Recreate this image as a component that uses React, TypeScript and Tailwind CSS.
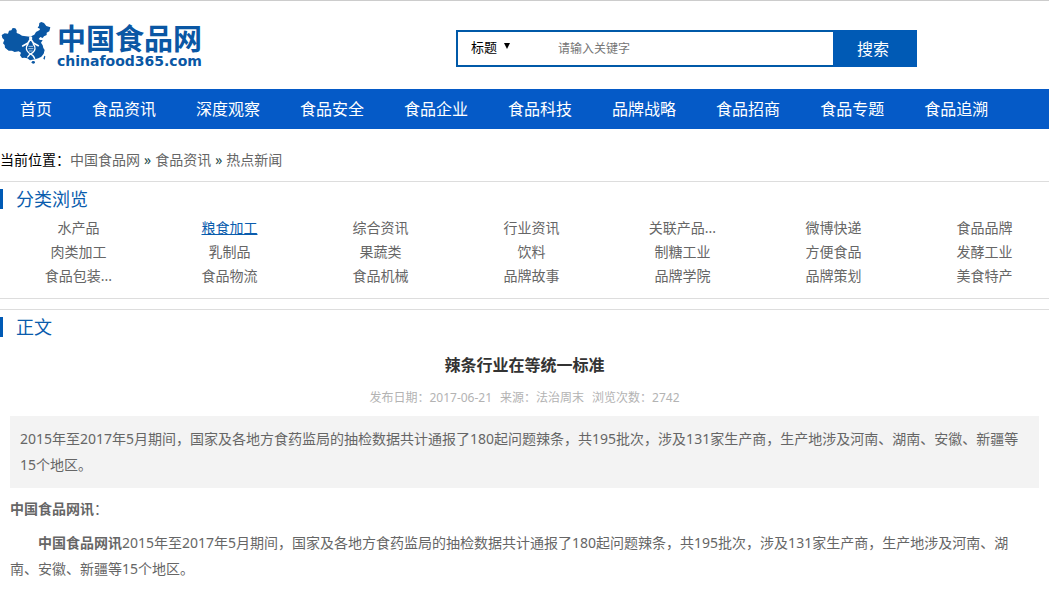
import type { ReactNode } from 'react';

const navItems = [
  '首页',
  '食品资讯',
  '深度观察',
  '食品安全',
  '食品企业',
  '食品科技',
  '品牌战略',
  '食品招商',
  '食品专题',
  '食品追溯',
];

const categories = [
  '水产品',
  '粮食加工',
  '综合资讯',
  '行业资讯',
  '关联产品...',
  '微博快递',
  '食品品牌',
  '肉类加工',
  '乳制品',
  '果蔬类',
  '饮料',
  '制糖工业',
  '方便食品',
  '发酵工业',
  '食品包装...',
  '食品物流',
  '食品机械',
  '品牌故事',
  '品牌学院',
  '品牌策划',
  '美食特产',
];

const activeCategory = '粮食加工';

const summary =
  '2015年至2017年5月期间，国家及各地方食药监局的抽检数据共计通报了180起问题辣条，共195批次，涉及131家生产商，生产地涉及河南、湖南、安徽、新疆等15个地区。';

function MapMark() {
  return (
    <svg viewBox="0 9 153 135" className="h-[45px] w-[51px] shrink-0" aria-hidden="true">
      <path
        fill="#0a57a4"
        d="M5 51L14 46L24 47L27 38L34 37L38 30L46 31L50 37L50 45L58 48L66 53L78 55L90 56L103 50L108 42L119 36L120 32L113 29L117 23L118 15L124 12L132 15L139 24L151 28L148 40L140 44L140 51L132 55L128 60L121 57L116 63L121 66L128 66L123 74L128 82L130 90L134 96L131 107L124 116L115 121L105 124L90 127L82 121L73 119L66 120L60 112L63 104L56 100L44 102L36 98L26 98L15 89L14 81L9 76L13 66L7 60Z"
      />
      <ellipse cx="100" cy="133" rx="5" ry="4" fill="#0a57a4" />
      <path d="M130 122L133 113L136 115L134 125Z" fill="#0a57a4" />
      <g fill="none" stroke="#fff" strokeLinecap="round" strokeLinejoin="round">
        <path d="M92 62L84 75L68 84M92 62L100 75L115 83" strokeWidth="5" />
        <path d="M84 78C76 88 78 98 87 105C94 109 102 112 104 122" strokeWidth="4" />
        <path d="M100 78C108 88 106 98 98 104C90 108 86 111 83 117" strokeWidth="4" />
        <path d="M87 85H98M86 92H99M88 99H97" strokeWidth="2" />
      </g>
      <circle cx="92" cy="60" r="5" fill="#fff" />
    </svg>
  );
}

function Logo() {
  return (
    <a href="#" className="flex w-[204px] shrink-0 items-start text-[#0a57a4]">
      <MapMark />
      <span className="ml-1.5 flex flex-col whitespace-nowrap pt-0.5 font-bold">
        <span className="text-[29px] leading-8">中国食品网</span>
        <span className="font-['DejaVu_Sans',sans-serif] text-sm leading-3">chinafood365.com</span>
      </span>
    </a>
  );
}

function SearchBar() {
  return (
    <form className="flex h-[37px] w-[461px]" onSubmit={(e) => e.preventDefault()}>
      <div className="flex min-w-0 flex-1 items-center border-2 border-r-0 border-[#0059a8]">
        <div className="relative ml-[13px] w-[87px] shrink-0 pb-1">
          <select
            aria-label="搜索范围"
            className="block h-6 w-full appearance-none bg-transparent text-[13px] leading-6 text-black outline-none"
          >
            <option>标题</option>
          </select>
          <svg
            viewBox="0 0 6 6"
            className="pointer-events-none absolute left-[33px] top-2 size-1.5"
            aria-hidden="true"
          >
            <path d="M0 0h6L3 6z" />
          </svg>
        </div>
        <input
          type="text"
          aria-label="关键字"
          placeholder="请输入关键字"
          className="h-full min-w-0 flex-1 bg-transparent text-xs outline-none placeholder:text-[#757575]"
        />
      </div>
      <button type="submit" className="w-[84px] bg-[#005ab5] pr-1 text-base text-white">
        搜索
      </button>
    </form>
  );
}

function SectionTitle({ children }: { children: ReactNode }) {
  return (
    <h2 className="flex h-5 items-center text-lg leading-5 text-[#0a5cad]">
      <span className="mr-[13px] h-5 w-[3px] bg-[#005ab5]" />
      {children}
    </h2>
  );
}

function Breadcrumb() {
  return (
    <nav className="flex h-[52px] items-center gap-1 pt-[10px] text-sm text-[#666]">
      <span className="w-[66px] whitespace-nowrap text-black">当前位置：</span>
      <a href="#">中国食品网</a>
      <span className="text-[#1c4a4a]">»</span>
      <a href="#">食品资讯</a>
      <span className="text-[#1c4a4a]">»</span>
      <a href="#">热点新闻</a>
    </nav>
  );
}

function App() {
  return (
    <div className="overflow-x-hidden border-t border-[#ccc] bg-white font-['Noto_Sans','Noto_Sans_CJK_SC',sans-serif]">
      <header className="flex h-[88px] items-start gap-[252px]">
        <div className="pt-5">
          <Logo />
        </div>
        <div className="pt-[29px]">
          <SearchBar />
        </div>
      </header>

      <nav className="flex h-10 bg-[#055ac7] text-base text-white">
        {navItems.map((item) => (
          <a key={item} href="#" className="whitespace-nowrap px-5 leading-10">
            {item}
          </a>
        ))}
      </nav>

      <Breadcrumb />

      <section className="border-y border-[#ddd] pb-[10px] pt-[7px]">
        <SectionTitle>分类浏览</SectionTitle>
        <ul className="-mr-[11px] ml-[3px] mt-[7px] grid grid-cols-7 text-center text-sm leading-6 text-[#666]">
          {categories.map((name) => (
            <li key={name}>
              <a href="#" className={name === activeCategory ? 'text-[#0a5cad] underline' : ''}>
                {name}
              </a>
            </li>
          ))}
        </ul>
      </section>

      <article className="mt-[10px] border-t border-[#ddd] pt-[7px]">
        <SectionTitle>正文</SectionTitle>
        <h1 className="mt-4 text-center text-base font-bold leading-6 text-[#333]">
          辣条行业在等统一标准
        </h1>
        <p className="mt-[11px] flex justify-center gap-2 text-xs leading-5 text-[#b3b3b3]">
          <span>发布日期：2017-06-21</span>
          <span>来源：法治周末</span>
          <span>浏览次数：2742</span>
        </p>
        <div className="mx-[10px] mt-2 bg-[#f3f3f3] p-[10px] text-sm leading-[26px] text-[#666]">
          {summary}
        </div>
        <div className="pl-[10px] pr-5 pt-2 text-sm leading-[26px] text-[#666]">
          <p>
            <strong>中国食品网讯</strong>：
          </p>
          <p className="mt-2 indent-7">
            <strong>中国食品网讯</strong>
            {summary}
          </p>
        </div>
      </article>
    </div>
  );
}

export default App;
